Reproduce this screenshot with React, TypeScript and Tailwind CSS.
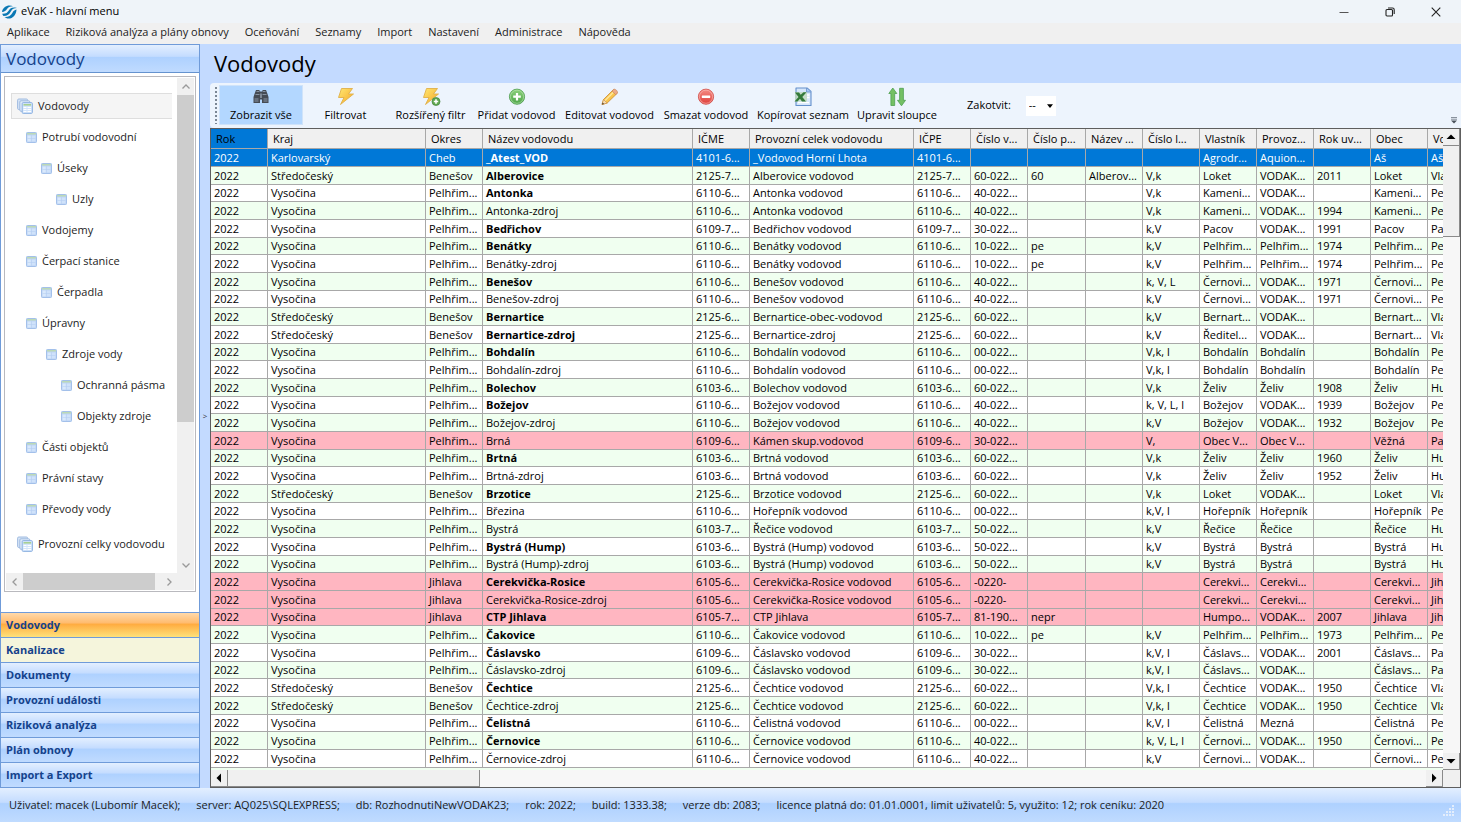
import React from "react";

type Row = {
  kraj: string;
  okres: string;
  nazev: string;
  bold?: boolean;
  icme: string;
  celek: string;
  icpe: string;
  cisloV: string;
  cisloP?: string;
  nazevP?: string;
  cisloL: string;
  vlastnik: string;
  provoz: string;
  rokUv: string;
  obec: string;
  vo: string;
  pink?: boolean;
};

function row(line: string): Row {
  const p = line.split("|");
  return {
    kraj: { V: "Vysočina", S: "Středočeský", K: "Karlovarský" }[p[0]] ?? p[0],
    okres: { P: "Pelhřim...", B: "Benešov", J: "Jihlava", C: "Cheb" }[p[1]] ?? p[1],
    bold: p[2].startsWith("*"),
    nazev: p[2].replace("*", ""),
    icme: p[3] + "...",
    celek: p[4],
    icpe: p[3] + "...",
    cisloV: p[5],
    cisloP: p[6],
    cisloL: p[7],
    vlastnik: p[8],
    provoz: p[9],
    rokUv: p[10],
    obec: p[11],
    vo: p[12],
    nazevP: p[13] ?? "",
    pink: p[14] === "pink",
  };
}

const rows: Row[] = [
  "K|C|*_Atest_VOD|4101-6|_Vodovod Horní Lhota||||Agrodr...|Aquion...||Aš|Aš",
  "S|B|*Alberovice|2125-7|Alberovice vodovod|60-022...|60|V,k|Loket|VODAK...|2011|Loket|Vla|Alberov...",
  "V|P|*Antonka|6110-6|Antonka vodovod|40-022...||V,k|Kameni...|VODAK...||Kameni...|Pe",
  "V|P|Antonka-zdroj|6110-6|Antonka vodovod|40-022...||V,k|Kameni...|VODAK...|1994|Kameni...|Pe",
  "V|P|*Bedřichov|6109-7|Bedřichov vodovod|30-022...||k,V|Pacov|VODAK...|1991|Pacov|Pa",
  "V|P|*Benátky|6110-6|Benátky vodovod|10-022...|pe|k,V|Pelhřim...|Pelhřim...|1974|Pelhřim...|Pe",
  "V|P|Benátky-zdroj|6110-6|Benátky vodovod|10-022...|pe|k,V|Pelhřim...|Pelhřim...|1974|Pelhřim...|Pe",
  "V|P|*Benešov|6110-6|Benešov vodovod|40-022...||k, V, L|Černovi...|VODAK...|1971|Černovi...|Pe",
  "V|P|Benešov-zdroj|6110-6|Benešov vodovod|40-022...||k,V|Černovi...|VODAK...|1971|Černovi...|Pe",
  "S|B|*Bernartice|2125-6|Bernartice-obec-vodovod|60-022...||k,V|Bernart...|VODAK...||Bernart...|Vla",
  "S|B|*Bernartice-zdroj|2125-6|Bernartice-zdroj|60-022...||k,V|Ředitel...|VODAK...||Bernart...|Vla",
  "V|P|*Bohdalín|6110-6|Bohdalín vodovod|00-022...||V,k, l|Bohdalín|Bohdalín||Bohdalín|Pe",
  "V|P|Bohdalín-zdroj|6110-6|Bohdalín vodovod|00-022...||V,k, l|Bohdalín|Bohdalín||Bohdalín|Pe",
  "V|P|*Bolechov|6103-6|Bolechov vodovod|60-022...||V,k|Želiv|Želiv|1908|Želiv|Hu",
  "V|P|*Božejov|6110-6|Božejov vodovod|40-022...||k, V, L, l|Božejov|VODAK...|1939|Božejov|Pe",
  "V|P|Božejov-zdroj|6110-6|Božejov vodovod|40-022...||k,V|Božejov|VODAK...|1932|Božejov|Pe",
  "V|P|Brná|6109-6|Kámen skup.vodovod|30-022...||V,|Obec V...|Obec V...||Věžná|Pa||pink",
  "V|P|*Brtná|6103-6|Brtná vodovod|60-022...||V,k|Želiv|Želiv|1960|Želiv|Hu",
  "V|P|Brtná-zdroj|6103-6|Brtná vodovod|60-022...||V,k|Želiv|Želiv|1952|Želiv|Hu",
  "S|B|*Brzotice|2125-6|Brzotice vodovod|60-022...||V,k|Loket|VODAK...||Loket|Vla",
  "V|P|Březina|6110-6|Hořepník vodovod|00-022...||k,V, l|Hořepník|Hořepník||Hořepník|Pe",
  "V|P|Bystrá|6103-7|Řečice vodovod|50-022...||k,V|Řečice|Řečice||Řečice|Hu",
  "V|P|*Bystrá (Hump)|6103-6|Bystrá (Hump) vodovod|50-022...||k,V|Bystrá|Bystrá||Bystrá|Hu",
  "V|P|Bystrá (Hump)-zdroj|6103-6|Bystrá (Hump) vodovod|50-022...||k,V|Bystrá|Bystrá||Bystrá|Hu",
  "V|J|*Cerekvička-Rosice|6105-6|Cerekvička-Rosice vodovod|-0220-|||Cerekvi...|Cerekvi...||Cerekvi...|Jih||pink",
  "V|J|Cerekvička-Rosice-zdroj|6105-6|Cerekvička-Rosice vodovod|-0220-|||Cerekvi...|Cerekvi...||Cerekvi...|Jih||pink",
  "V|J|*CTP Jihlava|6105-7|CTP Jihlava|81-190...|nepr||Humpo...|VODAK...|2007|Jihlava|Jih||pink",
  "V|P|*Čakovice|6110-6|Čakovice vodovod|10-022...|pe|k,V|Pelhřim...|Pelhřim...|1973|Pelhřim...|Pe",
  "V|P|*Čáslavsko|6109-6|Čáslavsko vodovod|30-022...||k,V, l|Čáslavs...|VODAK...|2001|Čáslavs...|Pa",
  "V|P|Čáslavsko-zdroj|6109-6|Čáslavsko vodovod|30-022...||k,V, l|Čáslavs...|VODAK...||Čáslavs...|Pa",
  "S|B|*Čechtice|2125-6|Čechtice vodovod|60-022...||V,k, l|Čechtice|VODAK...|1950|Čechtice|Vla",
  "S|B|Čechtice-zdroj|2125-6|Čechtice vodovod|60-022...||V,k, l|Čechtice|VODAK...|1950|Čechtice|Vla",
  "V|P|*Čelistná|6110-6|Čelistná vodovod|00-022...||k,V, l|Čelistná|Mezná||Čelistná|Pe",
  "V|P|*Černovice|6110-6|Černovice vodovod|40-022...||k, V, L, l|Černovi...|VODAK...|1950|Černovi...|Pe",
  "V|P|Černovice-zdroj|6110-6|Černovice vodovod|40-022...||k,V|Černovi...|VODAK...||Černovi...|Pe",
].map(row);

const columns: [string, string][] = [
  ["Rok", "w-[57px]"],
  ["Kraj", "w-[158px]"],
  ["Okres", "w-[57px]"],
  ["Název vodovodu", "w-[210px]"],
  ["IČME", "w-[57px]"],
  ["Provozní celek vodovodu", "w-[164px]"],
  ["IČPE", "w-[57px]"],
  ["Číslo v...", "w-[57px]"],
  ["Číslo p...", "w-[58px]"],
  ["Název ...", "w-[57px]"],
  ["Číslo l...", "w-[57px]"],
  ["Vlastník", "w-[57px]"],
  ["Provoz...", "w-[57px]"],
  ["Rok uv...", "w-[57px]"],
  ["Obec", "w-[57px]"],
  ["Vo", "w-[57px]"],
];

const menus = [
  "Aplikace",
  "Riziková analýza a plány obnovy",
  "Oceňování",
  "Seznamy",
  "Import",
  "Nastavení",
  "Administrace",
  "Nápověda",
];

const tree: [string, string][] = [
  ["Potrubí vodovodní", "pl-[15px]"],
  ["Úseky", "pl-[30px]"],
  ["Uzly", "pl-[45px]"],
  ["Vodojemy", "pl-[15px]"],
  ["Čerpací stanice", "pl-[15px]"],
  ["Čerpadla", "pl-[30px]"],
  ["Úpravny", "pl-[15px]"],
  ["Zdroje vody", "pl-[35px]"],
  ["Ochranná pásma", "pl-[50px]"],
  ["Objekty zdroje", "pl-[50px]"],
  ["Části objektů", "pl-[15px]"],
  ["Právní stavy", "pl-[15px]"],
  ["Převody vody", "pl-[15px]"],
];

const BLUE_BAND =
  "bg-[linear-gradient(#e3efff_0%,#c4dcff_42%,#aed1ff_46%,#c0dbff_100%)]";

const bands: [string, string][] = [
  ["Vodovody", "bg-[linear-gradient(#ffd9aa_0%,#ffbb6e_42%,#ffab3f_46%,#fee17a_100%)]"],
  ["Kanalizace", "bg-[#f5f5dc]"],
  ["Dokumenty", BLUE_BAND],
  ["Provozní události", BLUE_BAND],
  ["Riziková analýza", BLUE_BAND],
  ["Plán obnovy", BLUE_BAND],
  ["Import a Export", BLUE_BAND],
];

function LogoIcon() {
  return (
    <svg viewBox="0 0 17 14" className="h-[14px] w-[17px]">
      <g fill="#0a78b4">
        <path d="M1 7C1.500 3 5 .5 8.500.5c1.500 0 2.600.3 3.500.8C8.500 1.500 7 2.500 6 4 4.800 5.800 3.500 6.800 1 7z" />
        <path d="M1.200 8.800c3.600.2 5.300-1 6.600-3.200C9 3.400 10.500 2.300 14 2.500c.8.200 1.600.4 2 .6-3 .1-4.800.8-6 3.200-1.500 3-3.600 4.700-7.500 4.700-.6-.6-1-1.300-1.300-2.200z" />
        <path d="M3.500 12c4 .2 6.500-1.400 8-4.300.8-1.700 2-2.900 4-3.300C15.400 9.500 12 13.500 7.500 13.500c-1.600 0-3-.6-4-1.500z" />
      </g>
    </svg>
  );
}

function TableIcon() {
  return (
    <svg viewBox="0 0 11 11" className="h-[11px] w-[11px] shrink-0">
      <rect x=".5" y=".5" width="10" height="10" rx=".8" fill="#bcd3f5" stroke="#a3c0ea" />
      <rect x="1" y="1" width="9" height="1.500" fill="#bcd9b6" />
      <rect x="1.500" y="3.500" width="3.500" height="6" fill="#d9e9fc" />
      <rect x="5.500" y="3.500" width="4" height="6" fill="#cfe2fa" />
      <path d="M5.200 3.500v6M1.500 6.500h8" stroke="#b2cdf0" strokeWidth=".5" />
    </svg>
  );
}

function StackIcon() {
  return (
    <svg viewBox="0 0 16 16" className="h-4 w-4 shrink-0">
      <rect x=".6" y="1" width="10" height="10.500" rx="1.200" fill="#d5e4f7" stroke="#a0bbe0" />
      <rect x="2.800" y="2.800" width="10" height="10.500" rx="1.200" fill="#dfebfa" stroke="#a0bbe0" />
      <rect x="5.200" y="4.600" width="10.200" height="10.800" rx="1" fill="#d3e5fb" stroke="#8fb2e0" />
      <rect x="6.500" y="6" width="7.600" height="1.600" fill="#a7d092" />
      <path d="M6.500 9.500h3M6.500 11.500h3M6.500 13.500h3M10.500 9.500h3.600M10.500 11.500h3.600M10.500 13.500h3.600" stroke="#fff" />
    </svg>
  );
}

function Defs() {
  return (
    <defs>
      <linearGradient id="gold" x1="0" y1="0" x2="1" y2="1">
        <stop offset="0" stopColor="#ffe873" />
        <stop offset="1" stopColor="#f5a623" />
      </linearGradient>
      <linearGradient id="green" x1="0" y1="0" x2="0" y2="1">
        <stop offset="0" stopColor="#8fd27f" />
        <stop offset="1" stopColor="#4ba447" />
      </linearGradient>
      <linearGradient id="red" x1="0" y1="0" x2="0" y2="1">
        <stop offset="0" stopColor="#f58e86" />
        <stop offset="1" stopColor="#dd3c38" />
      </linearGradient>
    </defs>
  );
}

const BOLT = "M5.500 1.500 16.500 1.500 12.500 7 17.500 7 4.500 17.500 8 10.500 2.500 10.500z";

function ToolIcon({ kind }: { kind: string }) {
  return (
    <svg viewBox="0 0 20 20" className="h-5 w-5">
      <Defs />
      {kind === "find" && (
        <g>
          <path d="M5 3h3.500v1.500h3V3H15l1.500 4 1 3v6h-6.500v-3.500h-2V16H2.500v-6l1-3z" fill="#454b54" />
          <path d="M5.500 4.500h2.500M12 4.500h2.500M4.500 7.500h4M11.500 7.500h4" stroke="#8792a1" />
          <path d="M3.500 11h4v4h-4zM12.500 11h4v4h-4z" fill="#68717e" />
          <path d="M9 6.500h2v4.500H9z" fill="#7e8895" />
        </g>
      )}
      {kind === "bolt" && <path d={BOLT} fill="url(#gold)" stroke="#e0b04a" strokeWidth=".9" strokeLinejoin="round" />}
      {kind === "boltplus" && (
        <g>
          <path d={BOLT} fill="url(#gold)" stroke="#e0b04a" strokeWidth=".9" strokeLinejoin="round" />
          <circle cx="15" cy="14.500" r="4" fill="#61a951" stroke="#43823c" strokeWidth=".7" />
          <path d="M15 12.300v4.400M12.800 14.500h4.400" stroke="#fff" strokeWidth="1.600" />
        </g>
      )}
      {kind === "add" && (
        <g>
          <circle cx="10" cy="9.700" r="7.600" fill="url(#green)" stroke="#4b9c4c" strokeWidth=".8" />
          <circle cx="10" cy="9.700" r="6.600" fill="none" stroke="#b5e2aa" strokeWidth=".7" />
          <path d="M10 5.900v7.600M6.200 9.700h7.600" stroke="#fff" strokeWidth="2.200" />
        </g>
      )}
      {kind === "edit" && (
        <g>
          <path d="M2 17.500 3.500 12.500 13 3c1-1 4.800 2 3.900 3.600L7.200 16z" fill="#f8c44c" stroke="#c98a35" strokeWidth=".8" />
          <path d="M4.800 13.800 14.200 4.500" stroke="#ffe79b" strokeWidth="1.500" />
          <path d="M12 4l1.500-1.600c1.500-1.200 4.900 2 3.800 3.700L15.800 7.700z" fill="#edaa86" stroke="#c57f55" strokeWidth=".6" />
          <path d="M2 17.500 3.500 12.500 7.200 16z" fill="#f4ddb7" stroke="#c98a35" strokeWidth=".6" />
          <path d="M2 17.500l.6-2 1.500 1.400z" fill="#4b3d31" />
        </g>
      )}
      {kind === "delete" && (
        <g>
          <circle cx="10" cy="9.700" r="7.600" fill="url(#red)" stroke="#cf4a45" strokeWidth=".8" />
          <circle cx="10" cy="9.700" r="6.600" fill="none" stroke="#f9b8b2" strokeWidth=".7" />
          <rect x="5.800" y="8.500" width="8.400" height="2.500" rx=".4" fill="#fff" />
        </g>
      )}
      {kind === "excel" && (
        <g>
          <path d="M3 1h11l4 3.500v14H3z" fill="#d6e7fb" stroke="#6490cc" strokeWidth="1.100" strokeLinejoin="round" />
          <path d="M13.500 1V5H18" fill="#a9c8f0" stroke="#6490cc" strokeWidth=".8" />
          <path d="M5 15.700h11M14 8h2.500M14 10.500h2.500" stroke="#fff" strokeWidth="1.300" />
          <path d="M2 5h12v9.500H2z" fill="#c0d9b9" opacity=".75" />
          <path d="M2 5.500h4l1.700 2.300L10.500 5.200h3L9.300 9.900l3.700 4.600H9l-2-2.700-2.500 2.700H1.500l4-4.600z" fill="#347a3a" />
        </g>
      )}
      {kind === "sort" && (
        <g fill="#74c064" stroke="#4e9f50" strokeWidth=".8" strokeLinejoin="round">
          <path d="M5.800 1 9.800 6.500H7.700V18.500H3.900V6.500H1.800z" />
          <path d="M14.500 18.800 10.500 13.300h2.100V1.300h3.800v12h2.100z" />
        </g>
      )}
    </svg>
  );
}

const tools: [string, string, string][] = [
  ["find", "Zobrazit vše", "w-[84px] bg-[#b3d7ff] border-[#cfe3fa]"],
  ["bolt", "Filtrovat", "w-[85px] border-transparent"],
  ["boltplus", "Rozšířený filtr", "w-[85px] border-transparent"],
  ["add", "Přidat vodovod", "w-[87px] border-transparent"],
  ["edit", "Editovat vodovod", "w-[99px] border-transparent"],
  ["delete", "Smazat vodovod", "w-[94px] border-transparent"],
  ["excel", "Kopírovat seznam", "w-[100px] border-transparent"],
  ["sort", "Upravit sloupce", "w-[88px] border-transparent"],
];

const CHEVRONS: Record<string, string> = {
  up: "M1.500 6.500 5 3l3.500 3.500",
  down: "M1.500 3.500 5 7l3.500-3.500",
  left: "M6.500 1.500 3 5l3.500 3.500",
  right: "M3.500 1.500 7 5 3.500 8.500",
};

function Chevron({ dir }: { dir: string }) {
  return (
    <button aria-label={dir} className="flex h-[17px] w-[17px] shrink-0 items-center justify-center bg-[#f0f0f0]">
      <svg viewBox="0 0 10 10" className="h-[10px] w-[10px]">
        <path d={CHEVRONS[dir]} fill="none" stroke="#9a9a9a" strokeWidth="1.300" />
      </svg>
    </button>
  );
}

const ARROWS: Record<string, string> = {
  up: "M0.500 7 5 2.500 9.500 7z",
  down: "M0.500 3 5 7.500 9.500 3z",
  left: "M7 0.500 2.500 5 7 9.500z",
  right: "M3 0.500 7.500 5 3 9.500z",
};

function ClassicArrow({ dir }: { dir: string }) {
  return (
    <button
      aria-label={dir}
      className="flex h-[17px] w-[17px] shrink-0 items-center justify-center border-r border-b border-[#8a8a8a] bg-[#f0f0f0]"
    >
      <svg viewBox="0 0 10 10" className="h-[10px] w-[10px]">
        <path d={ARROWS[dir]} fill="#000" />
      </svg>
    </button>
  );
}

function Sidebar() {
  return (
    <aside className="flex w-[200px] shrink-0 flex-col border border-[#6f9bd9] bg-white">
      <h2 className={`flex h-[28px] shrink-0 items-center border-b border-[#6593cf] pl-[5px] text-[17px] text-[#15428b] ${BLUE_BAND}`}>
        Vodovody
      </h2>
      <div className="mx-[3px] mt-[3px] flex min-h-0 flex-1 flex-col border border-[#b9b9be] p-px">
        <div className="flex min-h-0 flex-1">
          <ul className="min-w-0 flex-1 overflow-hidden pt-[15px] pr-[5px] pl-[5px] whitespace-nowrap text-[#1c1c1c]">
            <li className="mb-[3px] flex h-[26px] items-center gap-[5px] border border-r-0 border-[#dedede] bg-[#f5f5f5] pl-[5px]">
              <StackIcon />
              Vodovody
            </li>
            {tree.map(([label, indent]) => (
              <li key={label} className={`flex h-[31px] items-center gap-[5px] ${indent}`}>
                <TableIcon />
                {label}
              </li>
            ))}
            <li className="mt-[6px] flex h-[26px] items-center gap-[5px] pl-[6px]">
              <StackIcon />
              Provozní celky vodovodu
            </li>
          </ul>
          <div className="flex w-[17px] shrink-0 flex-col bg-[#f0f0f0]">
            <Chevron dir="up" />
            <div className="flex flex-1 flex-col">
              <div className="basis-[71%] bg-[#cdcdcd]" />
            </div>
            <Chevron dir="down" />
          </div>
        </div>
        <div className="flex shrink-0 bg-[#f0f0f0]">
          <Chevron dir="left" />
          <div className="flex flex-1">
            <div className="basis-[96%] bg-[#cdcdcd]" />
          </div>
          <Chevron dir="right" />
          <div className="w-[17px]" />
        </div>
      </div>
      <nav className="mt-5 shrink-0">
        {bands.map(([label, bg]) => (
          <button
            key={label}
            className={`block h-[25px] w-full border-t border-[#6f9bd9] pl-[5px] text-left leading-6 font-bold text-[#15428b] ${bg}`}
          >
            {label}
          </button>
        ))}
      </nav>
    </aside>
  );
}

function Toolbar() {
  return (
    <div className="flex h-[45px] shrink-0 items-stretch rounded-l-sm bg-[#edf4fd] pl-1">
      <div className="my-1 mr-[2px] ml-px w-[2px] bg-[repeating-linear-gradient(#7c8794_0_2px,transparent_2px_4px)]" />
      {tools.map(([kind, label, cls]) => (
        <button
          key={kind}
          className={`mt-[2px] mb-[3px] flex shrink-0 flex-col items-center border pt-px whitespace-nowrap ${cls}`}
        >
          <ToolIcon kind={kind} />
          <span className="leading-4">{label}</span>
        </button>
      ))}
      <label htmlFor="dock" className="ml-[26px] self-center">
        Zakotvit:
      </label>
      <div className="relative ml-[15px] self-center">
        <select id="dock" className="h-5 w-[30px] appearance-none bg-white pl-[3px] outline-none">
          <option>--</option>
        </select>
        <svg viewBox="0 0 8 5" className="pointer-events-none absolute top-2 right-[3px] h-[4px] w-[6px]">
          <path d="M0 0h8L4 5z" fill="#000" />
        </svg>
      </div>
      <svg viewBox="0 0 7 8" className="mr-1 mb-1 ml-auto h-[7px] w-[6px] self-end">
        <path d="M0 .5h7M0 2.500h7" stroke="#6b7480" strokeWidth=".9" />
        <path d="M0 4h7L3.500 7.500z" fill="#4a525c" />
      </svg>
    </div>
  );
}

function Grid() {
  return (
    <div className="flex min-h-0 flex-1 flex-col border border-[#5e5e5e] bg-[#f7f7f7]">
      <div className="flex min-h-0 flex-1">
        <div className="min-w-0 flex-1 overflow-hidden bg-[#f0fff0]">
          <table className="w-full table-fixed border-separate border-spacing-0 whitespace-nowrap">
            <colgroup>
              {columns.map(([name, w]) => (
                <col key={name} className={w} />
              ))}
            </colgroup>
            <thead>
              <tr className="h-5">
                {columns.map(([name], i) => (
                  <th
                    key={name}
                    className={`overflow-hidden border-r border-b border-[#a8a8a8] p-0 pl-[5px] text-left leading-[18px] font-normal ${
                      i === 0 ? "bg-[#0078d7]" : "bg-[#f0f0f0]"
                    }`}
                  >
                    {name}
                  </th>
                ))}
              </tr>
            </thead>
            <tbody>
              {rows.map((r, i) => {
                const cells = [
                  "2022", r.kraj, r.okres, r.nazev, r.icme, r.celek, r.icpe, r.cisloV,
                  r.cisloP, r.nazevP, r.cisloL, r.vlastnik, r.provoz, r.rokUv, r.obec, r.vo,
                ];
                const tone =
                  i === 0
                    ? "bg-[#0078d7] text-white"
                    : r.pink
                      ? "bg-[#ffb6c1]"
                      : i % 2
                        ? "bg-[#f0fff0]"
                        : "bg-white";
                return (
                  <tr key={i} className={`h-[18px] nth-[3n]:h-[17px] ${tone}`}>
                    {cells.map((c, j) => (
                      <td
                        key={j}
                        className={`overflow-hidden border-r border-b border-[#a8a8a8] p-0 pl-[3px] leading-4 ${
                          j === 3 && r.bold ? "font-bold" : ""
                        }`}
                      >
                        {c}
                      </td>
                    ))}
                  </tr>
                );
              })}
            </tbody>
          </table>
        </div>
        <div className="flex w-[17px] shrink-0 flex-col">
          <ClassicArrow dir="up" />
          <div className="flex flex-1 flex-col">
            <div className="basis-[15%] border-r border-b border-[#8a8a8a] bg-[#f0f0f0]" />
          </div>
          <ClassicArrow dir="down" />
        </div>
      </div>
      <div className="flex shrink-0">
        <ClassicArrow dir="left" />
        <div className="flex flex-1">
          <div className="basis-[21%] border-r border-b border-[#8a8a8a] bg-[#f0f0f0]" />
        </div>
        <ClassicArrow dir="right" />
        <div className="w-[17px] bg-[#f0f0f0]" />
      </div>
    </div>
  );
}

export default function App() {
  return (
    <div className="flex h-screen flex-col overflow-hidden bg-[#c3daff] font-['Open_Sans','Noto_Sans',sans-serif] text-[11px] text-black">
      <header className="flex h-[23px] shrink-0 items-center bg-[#eff4f9] pr-[2px] pl-[1px]">
        <LogoIcon />
        <h1 className="ml-[3px]">eVaK - hlavní menu</h1>
        <div className="ml-auto flex">
          <button aria-label="Minimalizovat" className="flex w-[46px] justify-center">
            <svg viewBox="0 0 10 10" className="h-[10px] w-[10px]">
              <path d="M.5 5.500h9" stroke="#555" />
            </svg>
          </button>
          <button aria-label="Obnovit" className="flex w-[46px] justify-center">
            <svg viewBox="0 0 10 10" className="h-[10px] w-[10px]">
              <rect x="1" y="2.500" width="6.500" height="6.500" rx="1" fill="none" stroke="#222" strokeWidth="1.100" />
              <path d="M3 1h4.500Q9.200 1 9.200 2.700V7" fill="none" stroke="#222" strokeWidth="1.100" />
            </svg>
          </button>
          <button aria-label="Zavřít" className="flex w-[46px] justify-center">
            <svg viewBox="0 0 10 10" className="h-[10px] w-[10px]">
              <path d="M.7.7l8.600 8.600M9.300.7.7 9.300" stroke="#222" strokeWidth="1.100" />
            </svg>
          </button>
        </div>
      </header>
      <nav className="flex h-[21px] shrink-0 items-center gap-4 bg-[#f0f0f0] pb-[2px] pl-[7px] text-[#222]">
        {menus.map((m) => (
          <button key={m}>{m}</button>
        ))}
      </nav>
      <div className="flex min-h-0 flex-1">
        <Sidebar />
        <div className="flex w-[10px] shrink-0 items-center justify-center text-[8px] text-[#333]">&gt;</div>
        <main className="flex min-w-0 flex-1 flex-col">
          <h2 className="flex h-[39px] shrink-0 items-center pl-1 text-[22px]">Vodovody</h2>
          <Toolbar />
          <Grid />
        </main>
      </div>
      <footer className={`flex h-[34px] shrink-0 items-center gap-4 pl-[9px] text-[#1c1c1c] ${BLUE_BAND}`}>
        <span>Uživatel: macek (Lubomír Macek);</span>
        <span>server: AQ025\SQLEXPRESS;</span>
        <span>db: RozhodnutiNewVODAK23;</span>
        <span>rok: 2022;</span>
        <span>build: 1333.38;</span>
        <span>verze db: 2083;</span>
        <span>licence platná do: 01.01.0001, limit uživatelů: 5, využito: 12; rok ceníku: 2020</span>
        <svg viewBox="0 0 12 12" className="mr-[6px] mb-[5px] ml-auto h-3 w-3 self-end">
          <path
            d="M9 0h2v2H9zM6 3h2v2H6zM9 3h2v2H9zM3 6h2v2H3zM6 6h2v2H6zM9 6h2v2H9zM0 9h2v2H0zM3 9h2v2H3zM6 9h2v2H6zM9 9h2v2H9z"
            fill="#e4eefc"
          />
        </svg>
      </footer>
    </div>
  );
}
